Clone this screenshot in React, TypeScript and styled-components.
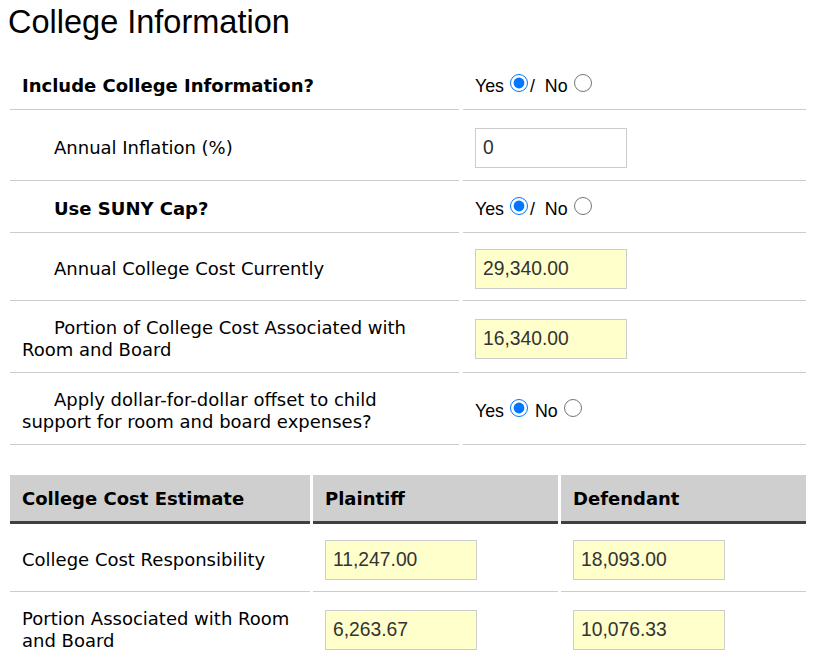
import React from "react";
import styled, { createGlobalStyle } from "styled-components";

const GlobalStyle = createGlobalStyle`
  html, body { margin: 0; padding: 0; background: #fff; }
  body { font-family: "DejaVu Sans", Verdana, sans-serif; color: #000; }
  * { box-sizing: border-box; }
`;

const Page = styled.div`
  width: 814px;
  padding: 0 0 0 10px;
`;

const Title = styled.h1`
  margin: 0 0 0 -2px;
  height: 58px;
  font-family: "Liberation Sans", Arial, sans-serif;
  font-weight: normal;
  font-size: 32.5px;
  line-height: 44px;
  color: #000;
`;

const Row = styled.div<{ $h: number; $cols: string; $gap: number }>`
  display: grid;
  grid-template-columns: ${(p) => p.$cols};
  column-gap: ${(p) => p.$gap}px;
  height: ${(p) => p.$h}px;
`;

const Cell = styled.div<{ $bold?: boolean }>`
  display: flex;
  align-items: center;
  padding: 5px 12px 0 12px;
  border-bottom: 1px solid #cccccc;
  font-size: 18px;
  line-height: 22px;
  font-weight: ${(p) => (p.$bold ? "bold" : "normal")};
`;

const LabelText = styled.div<{ $indent?: boolean }>`
  text-indent: ${(p) => (p.$indent ? "32px" : "0")};
`;

const HeaderCell = styled.div`
  display: flex;
  align-items: center;
  padding: 0 12px;
  background: #cfcfcf;
  border-bottom: 3px solid #3f3f3f;
  font-size: 18px;
  font-weight: bold;
`;

const TextInput = styled.input<{ $filled?: boolean }>`
  width: 152px;
  height: 40px;
  padding: 0 7px;
  border: 1px solid #cccccc;
  border-radius: 0;
  outline: none;
  background: ${(p) => (p.$filled ? "#ffffcc" : "#ffffff")};
  color: #333333;
  font-family: "Liberation Sans", Arial, sans-serif;
  font-size: 19.3px;
`;

const Choice = styled.div`
  display: flex;
  align-items: center;
  font-family: "Liberation Sans", Arial, sans-serif;
  font-size: 17.8px;
  white-space: pre;
  margin-top: -1px;
`;

const Radio = styled.input.attrs({ type: "radio" })`
  width: 18px;
  height: 18px;
  margin: -6px 2px 0 6px;
  accent-color: #0075ff;
`;

const Spacer = styled.div`
  height: 30px;
`;

const T1 = "449px 343px";
const T2 = "300px 245px 245px";

function YesNo({ name, slash, yes }: { name: string; slash: boolean; yes: boolean }) {
  return (
    <Choice>
      <span>Yes</span>
      <Radio name={name} defaultChecked={yes} />
      <span>{slash ? "/\u00a0 No" : " No"}</span>
      <Radio name={name} defaultChecked={!yes} />
    </Choice>
  );
}

export default function App() {
  return (
    <>
      <GlobalStyle />
      <Page>
        <Title>College Information</Title>

        <Row $h={52} $cols={T1} $gap={4}>
          <Cell $bold>
            <LabelText>Include College Information?</LabelText>
          </Cell>
          <Cell>
            <YesNo name="include" slash yes />
          </Cell>
        </Row>
        <Row $h={71} $cols={T1} $gap={4}>
          <Cell>
            <LabelText $indent>Annual Inflation (%)</LabelText>
          </Cell>
          <Cell>
            <TextInput defaultValue="0" />
          </Cell>
        </Row>
        <Row $h={52} $cols={T1} $gap={4}>
          <Cell $bold>
            <LabelText $indent>Use SUNY Cap?</LabelText>
          </Cell>
          <Cell>
            <YesNo name="suny" slash yes />
          </Cell>
        </Row>
        <Row $h={68} $cols={T1} $gap={4}>
          <Cell>
            <LabelText $indent>Annual College Cost Currently</LabelText>
          </Cell>
          <Cell>
            <TextInput $filled defaultValue="29,340.00" readOnly />
          </Cell>
        </Row>
        <Row $h={72} $cols={T1} $gap={4}>
          <Cell>
            <LabelText $indent>Portion of College Cost Associated with Room and Board</LabelText>
          </Cell>
          <Cell>
            <TextInput $filled defaultValue="16,340.00" readOnly />
          </Cell>
        </Row>
        <Row $h={72} $cols={T1} $gap={4}>
          <Cell>
            <LabelText $indent>
              Apply dollar-for-dollar offset to child support for room and board expenses?
            </LabelText>
          </Cell>
          <Cell>
            <YesNo name="offset" slash={false} yes />
          </Cell>
        </Row>

        <Spacer />

        <Row $h={49} $cols={T2} $gap={3}>
          <HeaderCell>College Cost Estimate</HeaderCell>
          <HeaderCell>Plaintiff</HeaderCell>
          <HeaderCell>Defendant</HeaderCell>
        </Row>
        <Row $h={68} $cols={T2} $gap={3}>
          <Cell>
            <LabelText>College Cost Responsibility</LabelText>
          </Cell>
          <Cell>
            <TextInput $filled defaultValue="11,247.00" readOnly />
          </Cell>
          <Cell>
            <TextInput $filled defaultValue="18,093.00" readOnly />
          </Cell>
        </Row>
        <Row $h={72} $cols={T2} $gap={3}>
          <Cell>
            <LabelText>Portion Associated with Room and Board</LabelText>
          </Cell>
          <Cell>
            <TextInput $filled defaultValue="6,263.67" readOnly />
          </Cell>
          <Cell>
            <TextInput $filled defaultValue="10,076.33" readOnly />
          </Cell>
        </Row>
      </Page>
    </>
  );
}
